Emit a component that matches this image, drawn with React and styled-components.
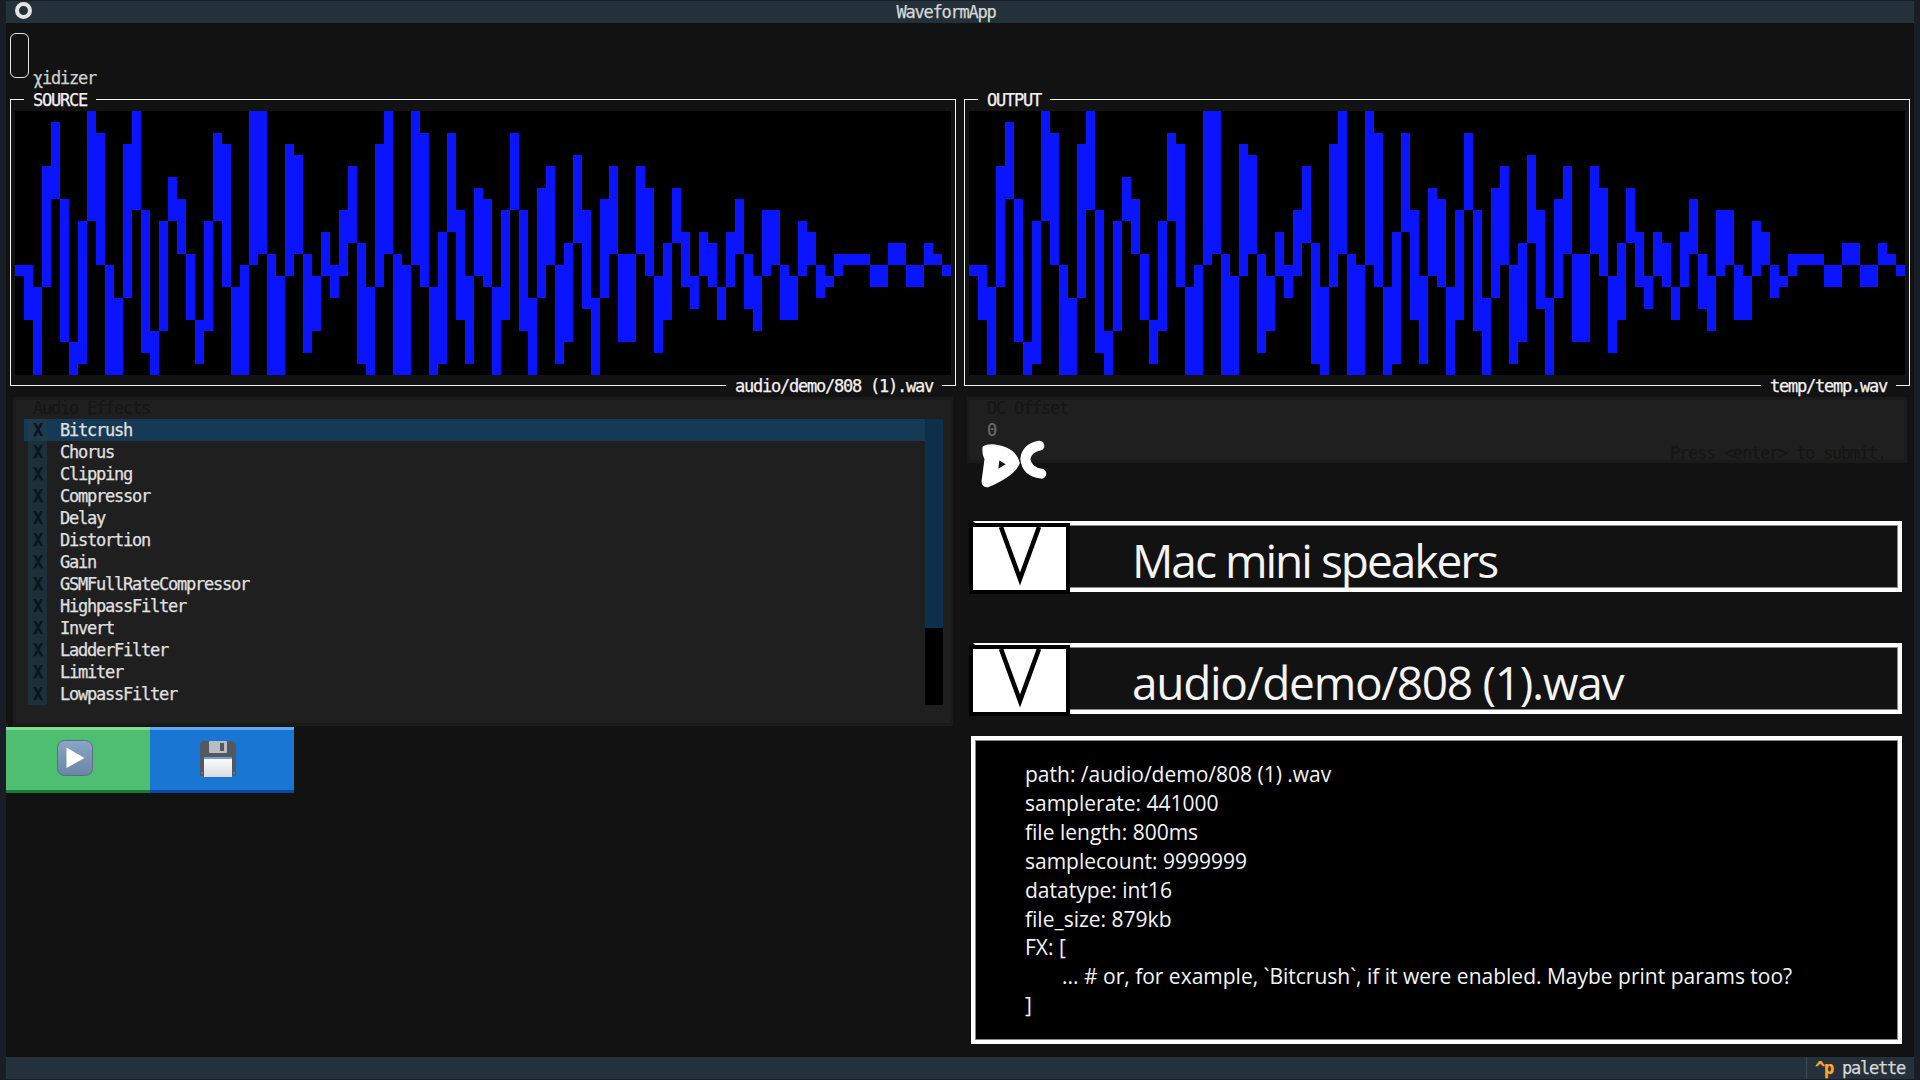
import React from "react";
import styled, { createGlobalStyle } from "styled-components";

const Global = createGlobalStyle`
  html, body { margin: 0; padding: 0; background: #191d26; }
  * { box-sizing: border-box; }
`;

const mono = `font-family: "DejaVu Sans Mono", "Liberation Mono", monospace; font-size: 17px; letter-spacing: -1.23px; -webkit-text-stroke: 0.25px currentColor;`;
const human = `font-family: "Open Sans", "Noto Sans", sans-serif; -webkit-text-stroke: 0;`;

const WAVE = [
  [14,15],[14,19],[16,24],[5,16],[1,8],[8,21],[21,24],[10,23],[0,10],[2,14],[14,24],[17,24],[3,17],[0,9],[9,22],[20,24],
  [10,20],[6,10],[8,13],[13,19],[19,23],[10,20],[2,10],[3,16],[16,24],[14,24],[0,14],[0,13],[13,24],[15,24],[3,15],[4,13],
  [13,22],[15,20],[11,15],[14,17],[9,15],[5,12],[12,23],[16,24],[3,16],[0,13],[13,24],[14,24],[0,14],[2,16],[16,24],[11,23],
  [2,11],[9,19],[15,23],[7,15],[8,16],[16,24],[9,19],[2,9],[9,20],[17,24],[7,17],[5,14],[14,23],[12,21],[4,12],[9,18],
  [17,24],[8,17],[5,13],[13,21],[13,21],[5,13],[7,15],[15,22],[12,19],[7,12],[11,16],[15,18],[11,15],[12,16],[16,19],[11,16],
  [8,13],[13,18],[15,20],[9,15],[9,14],[14,19],[15,19],[10,15],[11,14],[14,17],[15,16],[13,15],[13,14],[13,14],[13,14],[14,16],
  [14,16],[12,14],[12,14],[14,16],[14,16],[12,14],[13,14],[14,15],
];

const EFFECTS = ["Bitcrush","Chorus","Clipping","Compressor","Delay","Distortion","Gain","GSMFullRateCompressor","HighpassFilter","Invert","LadderFilter","Limiter","LowpassFilter"];

const INFO = ["path: /audio/demo/808 (1) .wav","samplerate: 441000","file length: 800ms","samplecount: 9999999","datatype: int16","file_size: 879kb","FX: ["];

const Page = styled.div`
  width: 1920px; height: 1080px; padding: 1px 6px; overflow: hidden;
  display: flex;
`;
const Screen = styled.div`
  flex: 1; display: flex; flex-direction: column; background: #121212; color: #e0e0e0; ${mono}
`;
const Header = styled.header`
  height: 22px; flex: none; background: #24313a; position: relative; padding-right: 28px;
  display: flex; align-items: center; justify-content: center; line-height: 22px; color: #d6d6d6;
`;
const HeaderIcon = styled.span`
  position: absolute; left: 9px; top: 1px; width: 17px; height: 17px; border-radius: 50%;
  border: 4px solid #e4e4e4;
`;
const Toolbar = styled.div`
  height: 76px; flex: none; padding: 10px 0 0 4px; display: flex; align-items: flex-start; gap: 4px;
`;
const RoundButton = styled.div`
  width: 19px; height: 45px; border: 1px solid #e6e6e6; border-radius: 6px; background: transparent;
`;
const AppName = styled.span`
  margin-top: 34px; line-height: 22px; color: #cfcfcf;
`;
const Scopes = styled.div`
  display: grid; grid-template-columns: 946px 946px; column-gap: 8px; padding-left: 4px; flex: none;
`;
const Scope = styled.section`
  position: relative; height: 287px; border: 1px solid #f2f2f2; padding: 11px 0 0 4px;
`;
const BorderLabel = styled.span`
  position: absolute; background: #121212; padding: 0 9px; line-height: 22px; height: 22px; color: #f2f2f2;
  ${p => p.$bottom ? `right: 13px; bottom: -12px;` : `left: 13px; top: -11px;`}
`;
const Plot = styled.svg`
  display: block; width: 936px; height: 264px; background: #000;
`;
const Lower = styled.div`
  display: grid; grid-template-columns: 940px 940px; column-gap: 14px; padding: 11px 0 0 7px; flex: none;
`;
const LeftColumn = styled.div`
  display: flex; flex-direction: column; margin-left: -7px;
`;
const RightColumn = styled.div`
  display: flex; flex-direction: column;
`;
const Panel = styled.div`
  position: relative; background: #1f1f1f; border: 3px solid #1a1a1a; color: #c8c8c8;
`;
const EffectsPanel = styled(Panel)`
  margin-left: 7px; height: 329px; padding: 0 5px;
`;
const PanelTitle = styled.div`
  margin-top: -3px; height: 22px; line-height: 22px; color: #161616; padding-left: 12px;
`;
const ListWrap = styled.div`
  display: flex; height: 286px;
`;
const List = styled.ul`
  list-style: none; margin: 0 0 0 3px; padding: 0; width: 901px;
`;
const Row = styled.li`
  height: 22px; line-height: 22px; display: flex; padding-left: 4px; color: #e0e0e0;
  background: ${p => p.$active ? "#163a56" : "transparent"};
`;
const Check = styled.span`
  width: 19px; text-align: center; font-weight: bold; color: #08161f; background: ${p => p.$active ? "#1f3a4c" : "#1e2f39"};
`;
const RowLabel = styled.span`
  margin-left: 13px;
`;
const Scrollbar = styled.div`
  width: 18px; background: #000; display: flex; flex-direction: column;
`;
const ScrollThumb = styled.div`
  height: 209px; background: #0c2f4c;
`;
const Actions = styled.div`
  display: flex; margin-top: 1px;
`;
const ActionButton = styled.button`
  width: 144px; height: 66px; border: 0; padding: 0 ${p => p.$shift}px ${p => p.$lift}px 0;
  border-top: 3px solid ${p => p.$top}; border-bottom: 3px solid ${p => p.$bot};
  background: ${p => p.$bg}; display: flex; align-items: center; justify-content: center;
`;
const OffsetPanel = styled(Panel)`
  height: 66px; padding: 0 17px;
`;
const OffsetTitle = styled(PanelTitle)`
  padding-left: 0;
`;
const OffsetValue = styled.div`
  line-height: 22px; color: #6a6a6a;
`;
const Hint = styled.span`
  position: absolute; right: 18px; top: 42px; line-height: 22px; color: #161616;
`;
const Logo = styled.svg`
  display: block; width: 70px; height: 50px; margin: -25px 0 0 13px; position: relative;
`;
const Select = styled.div`
  position: relative; height: 71px; margin: ${p => p.$top}px 5px 0 6px;
  border: 4px solid #fff; box-shadow: inset 0 0 0 1px #888; background: #121212;
  display: flex; align-items: center; padding: 7px 0 0 155px; border-left: 4px solid #121212;
  ${human} font-size: 46px; letter-spacing: ${p => p.$track}px; color: #f4f4f4; line-height: 57px;
`;
const Caret = styled.div`
  position: absolute; left: -8px; top: -2px; width: 101px; height: 71px; background: #fff; border: 4px solid #000;
  display: flex; justify-content: center;
`;
const InfoBox = styled.pre`
  margin: 22px 5px 0 4px; height: 308px; border: 4px solid #fff; box-shadow: inset 0 0 0 1px #888; background: #000;
  padding: 20px 0 0 50px; ${human} font-size: 21px; line-height: 28.9px; letter-spacing: 0; color: #f4f4f4;
`;
const InfoLine = styled.div`
  padding-left: ${p => p.$indent ? 37 : 0}px;
`;
const Footer = styled.footer`
  margin-top: auto; height: 22px; flex: none; background: #24313a; display: flex; justify-content: flex-end; line-height: 22px;
`;
const Palette = styled.div`
  border-left: 1px solid #3f4c55; padding: 0 9px 0 8px; color: #d6d6d6;
`;
const Key = styled.b`
  color: #ffa62b; margin-right: 9px;
`;

function Wave() {
  return (
    <Plot viewBox="0 0 936 264" shapeRendering="crispEdges">
      {WAVE.map(([a, b], i) => (
        <rect key={i} x={i * 9} y={a * 11} width="9" height={(b - a) * 11} fill="#0a14ff" />
      ))}
    </Plot>
  );
}

function CaretIcon() {
  return (
    <svg width="44" height="60" viewBox="0 0 44 60">
      <path d="M3 0 L22 52 L41 0" fill="none" stroke="#000" strokeWidth="4.5" />
    </svg>
  );
}

function PlayIcon() {
  return (
    <svg width="36" height="36" viewBox="0 0 36 36">
      <defs>
        <linearGradient id="pg" x1="0" y1="0" x2="0" y2="1">
          <stop offset="0" stopColor="#8ba6c4" />
          <stop offset="1" stopColor="#6b85a6" />
        </linearGradient>
      </defs>
      <rect x="0.5" y="0.5" width="35" height="35" rx="7" fill="url(#pg)" stroke="#5c6f87" />
      <path d="M9.5 7.5 L27.5 18 L9.5 28 Z" fill="#fff" />
    </svg>
  );
}

function SaveIcon() {
  return (
    <svg width="36" height="36" viewBox="0 0 36 36">
      <defs>
        <linearGradient id="fg" x1="0" y1="0" x2="0" y2="1">
          <stop offset="0" stopColor="#ffffff" />
          <stop offset="1" stopColor="#d9dbe0" />
        </linearGradient>
      </defs>
      <path d="M2 0 H33 L36 3 V35 H0 V2 Z" fill="#55585e" />
      <rect x="9" y="0" width="18" height="12" rx="1" fill="#b9bcc0" />
      <rect x="20" y="2" width="4" height="8" fill="#55585e" />
      <rect x="4" y="16" width="28" height="20" fill="url(#fg)" />
      <rect x="4" y="16" width="28" height="2" fill="#6b9ee0" />
      <rect x="1" y="31" width="2" height="2" fill="#3f78c4" />
      <rect x="33" y="31" width="2" height="2" fill="#3f78c4" />
    </svg>
  );
}

function DcLogo() {
  return (
    <Logo viewBox="90 175 210 150">
      <path fillRule="evenodd" fill="#fff" stroke="#fff" strokeWidth="5" strokeLinejoin="round"
        d="M100 203 Q110 195 135 197 Q195 205 207 250 Q195 285 115 320 Q97 322 97 305 L106 238 Q98 225 100 203 Z M146 238 L142 272 L172 254 Z" />
      <path fill="none" stroke="#fff" strokeWidth="30" strokeLinecap="round"
        d="M268 198 Q230 206 226 238 Q230 276 274 282" />
    </Logo>
  );
}

export default function App() {
  return (
    <>
      <Global />
      <Page>
        <Screen>
          <Header><HeaderIcon />WaveformApp</Header>
          <Toolbar><RoundButton /><AppName>χidizer</AppName></Toolbar>
          <Scopes>
            <Scope>
              <BorderLabel>SOURCE</BorderLabel>
              <Wave />
              <BorderLabel $bottom>audio/demo/808 (1).wav</BorderLabel>
            </Scope>
            <Scope>
              <BorderLabel>OUTPUT</BorderLabel>
              <Wave />
              <BorderLabel $bottom>temp/temp.wav</BorderLabel>
            </Scope>
          </Scopes>
          <Lower>
            <LeftColumn>
              <EffectsPanel>
                <PanelTitle>Audio Effects</PanelTitle>
                <ListWrap>
                  <List>
                    {EFFECTS.map((e, i) => (
                      <Row key={e} $active={i === 0}>
                        <Check $active={i === 0}>X</Check>
                        <RowLabel>{e}</RowLabel>
                      </Row>
                    ))}
                  </List>
                  <Scrollbar><ScrollThumb /></Scrollbar>
                </ListWrap>
              </EffectsPanel>
              <Actions>
                <ActionButton $bg="#4ebf71" $top="#7ee08f" $bot="#1a7a38" $shift={6} $lift={4}><PlayIcon /></ActionButton>
                <ActionButton $bg="#1976d2" $top="#5ea8f5" $bot="#0d47a1" $shift={8} $lift={2}><SaveIcon /></ActionButton>
              </Actions>
            </LeftColumn>
            <RightColumn>
              <OffsetPanel>
                <OffsetTitle>DC Offset</OffsetTitle>
                <OffsetValue>0</OffsetValue>
                <Hint>Press &lt;enter&gt; to submit.</Hint>
              </OffsetPanel>
              <DcLogo />
              <Select $top={33} $track={-2}><Caret><CaretIcon /></Caret>Mac mini speakers</Select>
              <Select $top={51} $track={-1.3}><Caret><CaretIcon /></Caret>audio/demo/808 (1).wav</Select>
              <InfoBox>
                {INFO.map(l => <InfoLine key={l}>{l}</InfoLine>)}
                <InfoLine $indent>... # or, for example, `Bitcrush`, if it were enabled. Maybe print params too?</InfoLine>
                <InfoLine>]</InfoLine>
              </InfoBox>
            </RightColumn>
          </Lower>
          <Footer><Palette><Key>^p</Key>palette</Palette></Footer>
        </Screen>
      </Page>
    </>
  );
}
